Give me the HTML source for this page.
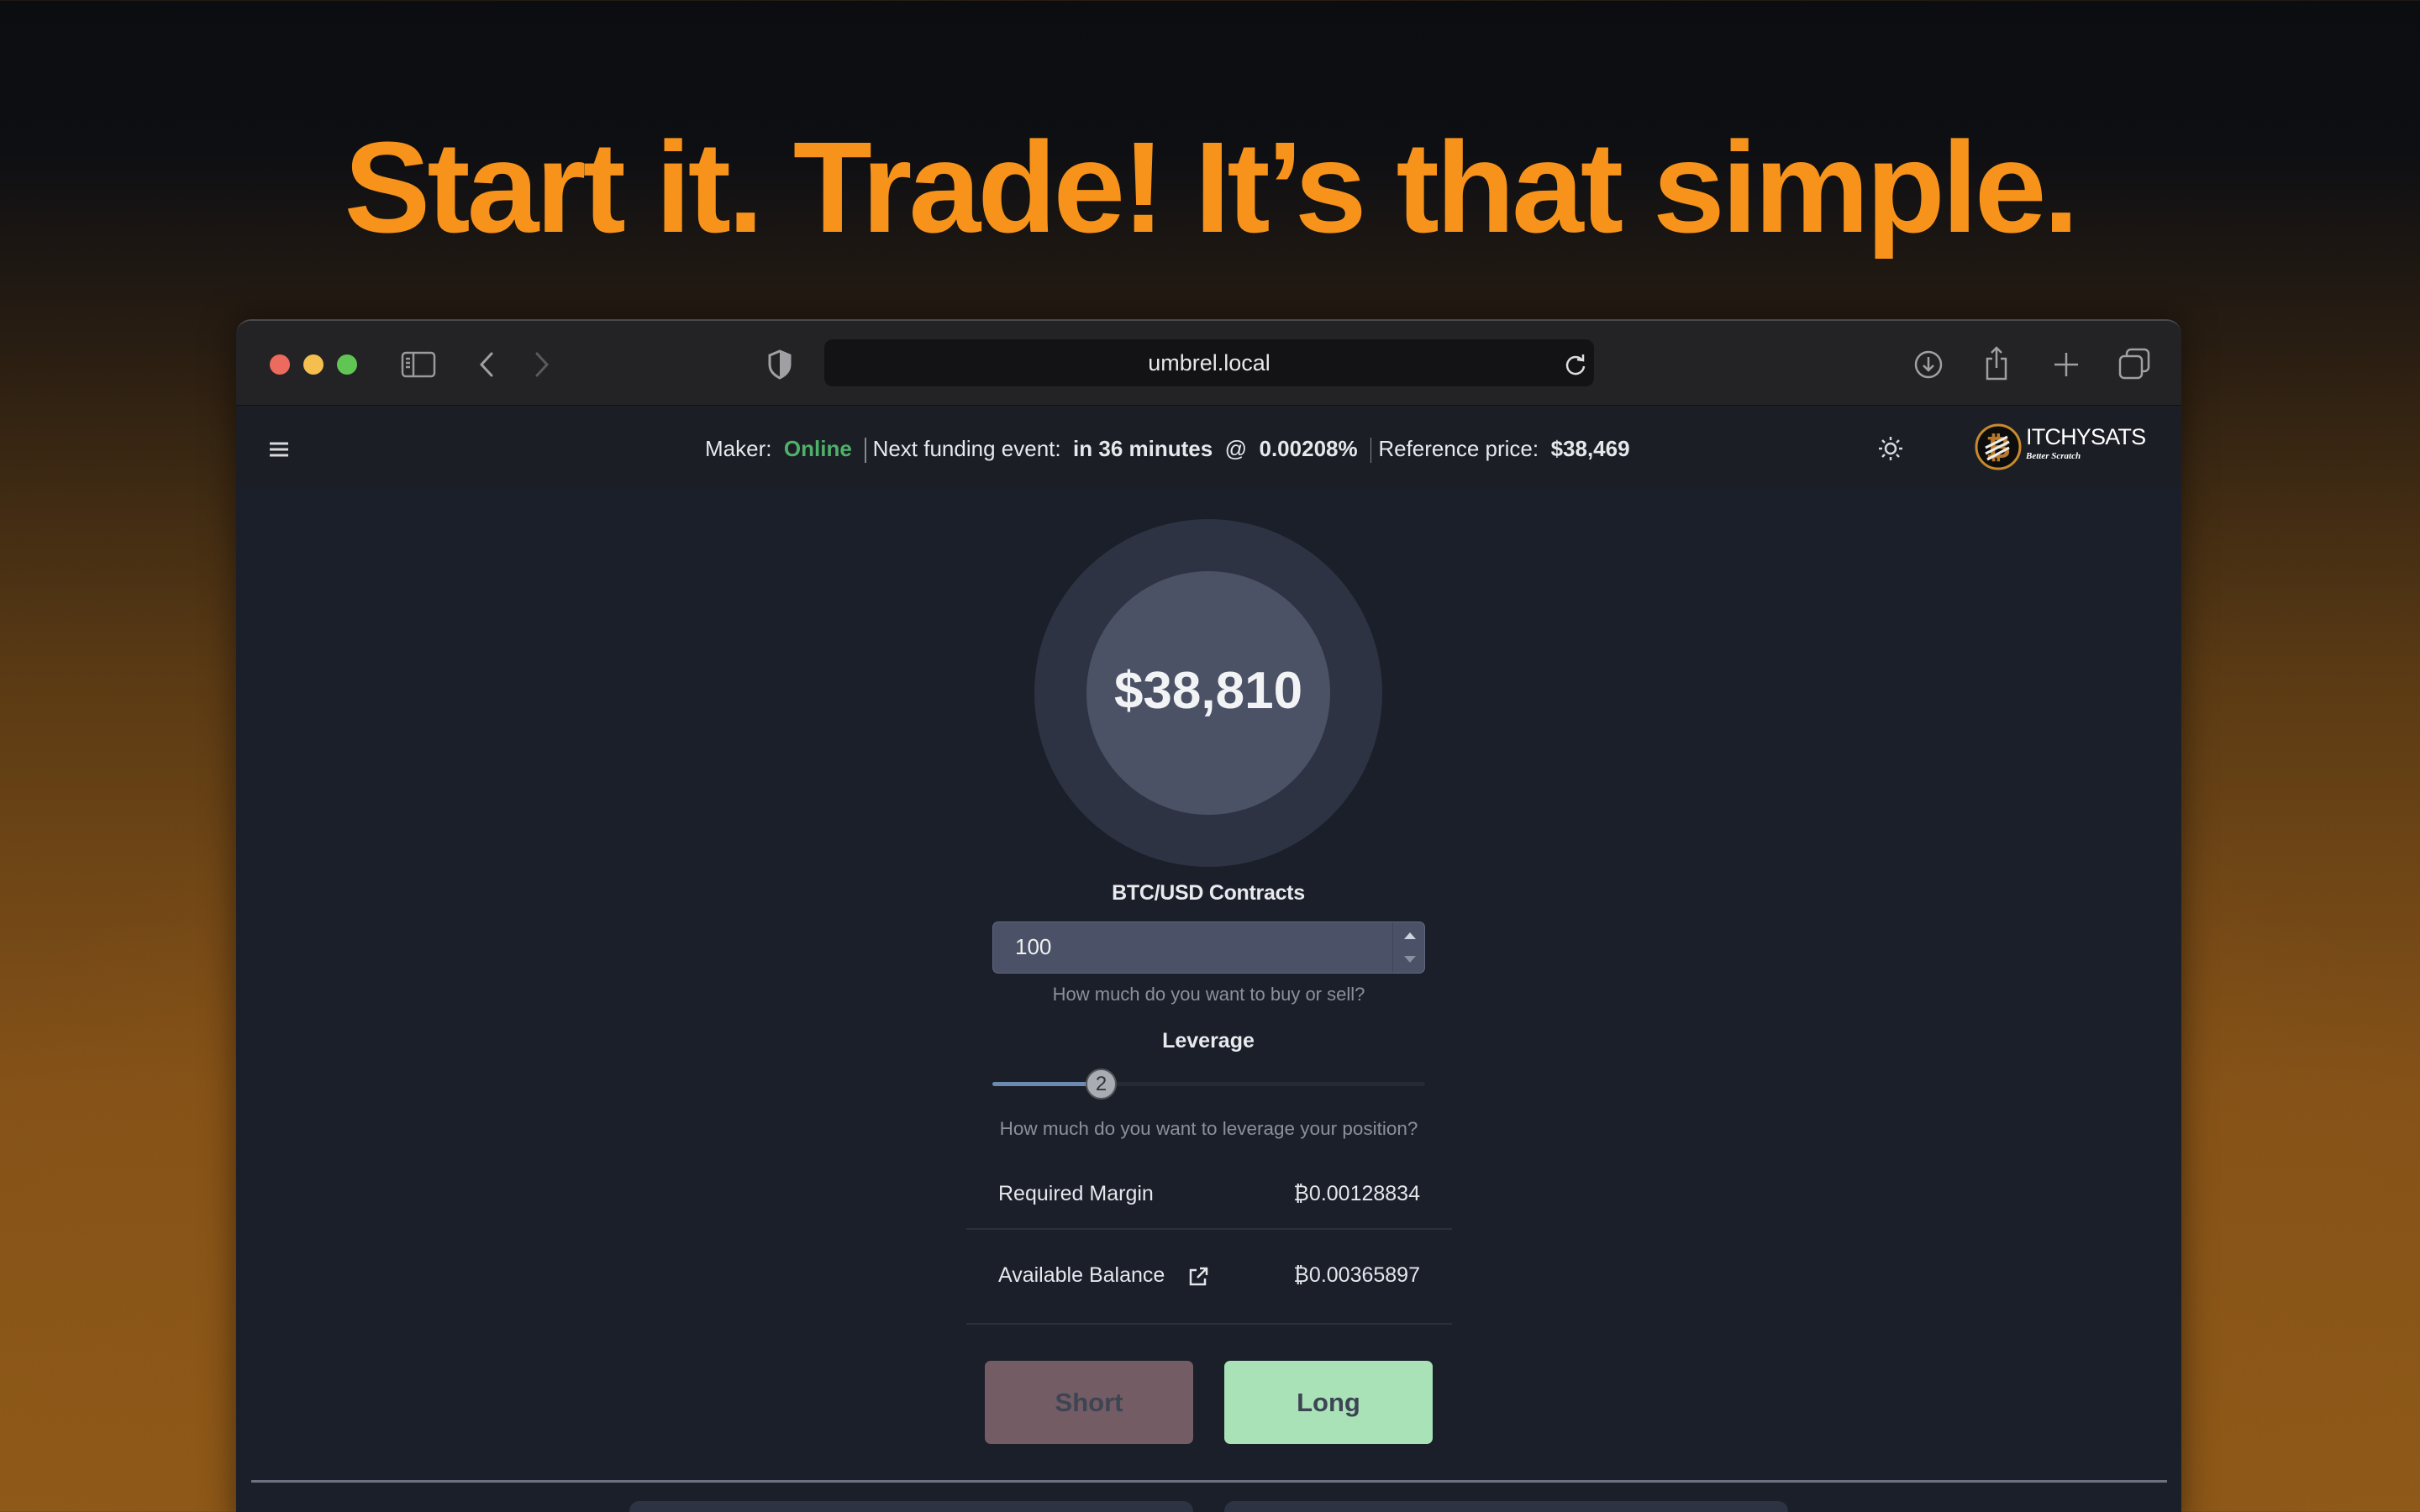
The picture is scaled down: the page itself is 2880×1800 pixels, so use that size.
<!DOCTYPE html>
<html><head><meta charset="utf-8">
<style>
*{margin:0;padding:0;box-sizing:border-box}
html,body{width:2880px;height:1800px;overflow:hidden}
body{font-family:"Liberation Sans",sans-serif;position:relative;
background:
radial-gradient(ellipse 1700px 1300px at 1440px 1900px, rgba(170,105,25,0.85) 0%, rgba(140,85,20,0.6) 45%, rgba(0,0,0,0) 100%),
linear-gradient(180deg,#0b0d11 0px,#0e0f13 180px,#2a1e12 420px,#5a3a14 800px,#855218 1300px,#8f5a1a 1800px);}
.h1{position:absolute;left:0;width:2880px;top:133px;text-align:center;color:#f7931a;font-weight:700;font-size:154px;letter-spacing:-3.9px;line-height:180px}
.win{position:absolute;left:281px;top:380px;width:2315px;height:1440px;background:#1b1f2a;border-radius:18px 18px 0 0;overflow:hidden;box-shadow:0 0 40px rgba(0,0,0,.5);border-top:2px solid #4a4a4c}
.tb{position:absolute;left:0;top:0;width:100%;height:101px;background:#232326;border-bottom:1px solid #111}
.dot{position:absolute;top:40px;width:24px;height:24px;border-radius:50%}
.url{position:absolute;left:700px;top:22px;width:916px;height:56px;background:#131315;border-radius:10px;color:#e8e8e8;font-size:27px;text-align:center;line-height:56px}
.nav{position:absolute;left:0;top:101px;width:100%;height:99px;background:#1c1e25}
.t{position:absolute;white-space:nowrap}
svg{position:absolute}
</style></head><body>
<div class="h1">Start it. Trade! It’s that simple.</div>
<div class="win">
 <div class="tb">
  <div class="dot" style="left:40px;background:#ed6a5e"></div>
  <div class="dot" style="left:80px;background:#f4bf4f"></div>
  <div class="dot" style="left:120px;background:#61c554"></div>
  <svg style="left:196px;top:36px" width="42" height="32" viewBox="0 0 42 32" fill="none" stroke="#9a9a9e" stroke-width="2.5"><rect x="2" y="2" width="38" height="28" rx="4"/><line x1="15" y1="2" x2="15" y2="30"/><line x1="6" y1="9" x2="11" y2="9"/><line x1="6" y1="14" x2="11" y2="14"/><line x1="6" y1="19" x2="11" y2="19"/></svg>
  <svg style="left:288px;top:36px" width="20" height="32" viewBox="0 0 20 32" fill="none" stroke="#a0a0a4" stroke-width="3" stroke-linecap="round"><path d="M16 3 L4 16 L16 29"/></svg>
  <svg style="left:354px;top:36px" width="20" height="32" viewBox="0 0 20 32" fill="none" stroke="#5a5a5e" stroke-width="3" stroke-linecap="round"><path d="M4 3 L16 16 L4 29"/></svg>
  <svg style="left:632px;top:34px" width="30" height="36" viewBox="0 0 30 36"><path d="M15 2 L27 7 L27 18 C27 26 21 31 15 34 C9 31 3 26 3 18 L3 7 Z" fill="none" stroke="#a0a0a4" stroke-width="3"/><path d="M15 2 L27 7 L27 18 C27 26 21 31 15 34 Z" fill="#a0a0a4"/></svg>
  <div class="url">umbrel.local</div>
  <svg style="left:1580px;top:37px" width="28" height="30" viewBox="0 0 28 30" fill="none" stroke="#ddd" stroke-width="2.5"><path d="M22 10 A10 10 0 1 0 24 17"/><path d="M16 9 L23 10 L23 3"/></svg>
  <svg style="left:1996px;top:34px" width="36" height="36" viewBox="0 0 36 36" fill="none" stroke="#a0a0a4" stroke-width="2.5"><circle cx="18" cy="18" r="15"/><path d="M18 9 V25 M12 19 L18 25 L24 19"/></svg>
  <svg style="left:2080px;top:30px" width="30" height="42" viewBox="0 0 30 42" fill="none" stroke="#a0a0a4" stroke-width="2.5"><path d="M10 15 H4 V39 H26 V15 H20"/><path d="M15 2 V26 M9 8 L15 2 L21 8"/></svg>
  <svg style="left:2162px;top:36px" width="32" height="32" viewBox="0 0 32 32" stroke="#a0a0a4" stroke-width="2.5"><path d="M16 2 V30 M2 16 H30"/></svg>
  <svg style="left:2240px;top:32px" width="38" height="38" viewBox="0 0 38 38" fill="none" stroke="#a0a0a4" stroke-width="2.5"><rect x="10" y="2" width="26" height="26" rx="5"/><rect x="2" y="10" width="26" height="26" rx="5" fill="#232326"/></svg>
 </div>
 <div class="nav">
  <svg style="left:40px;top:43px" width="22" height="18" viewBox="0 0 22 18" stroke="#d8d8dc" stroke-width="3"><path d="M0 2 H22 M0 9 H22 M0 16 H22"/></svg>
  <div class="t" style="left:558px;top:35px;font-size:26px;color:#e6e8ec;line-height:32px;letter-spacing:0px">Maker:&nbsp; <b style="color:#4fb06a">Online</b> <span style="display:inline-block;width:1.5px;height:30px;background:#888;vertical-align:middle;margin:0 8px"></span>Next funding event:&nbsp; <b>in 36 minutes</b>&nbsp; @&nbsp; <b>0.00208%</b> <span style="display:inline-block;width:1.5px;height:30px;background:#888;vertical-align:middle;margin:0 8px"></span>Reference price:&nbsp; <b>$38,469</b></div>
  <svg style="left:1954px;top:36px" width="30" height="30" viewBox="0 0 30 30" fill="none" stroke="#d8d8dc" stroke-width="2.5"><circle cx="15" cy="15" r="6"/><path d="M15 1 V5 M15 25 V29 M1 15 H5 M25 15 H29 M5 5 L8 8 M22 22 L25 25 M5 25 L8 22 M22 8 L25 5"/></svg>
  <svg style="left:2068px;top:20px" width="58" height="58" viewBox="0 0 58 58"><circle cx="29" cy="29" r="26" fill="#0d0d0d" stroke="#c88a2e" stroke-width="3"/><text x="29" y="42" text-anchor="middle" font-size="36" font-weight="700" fill="#b87a28" font-family="Liberation Sans">₿</text><path d="M14 30 L40 17 M14 37 L42 23 M16 44 L42 30" stroke="#eee" stroke-width="3"/></svg>
  <div class="t" style="left:2130px;top:22px;font-size:27px;color:#fff;font-weight:400;letter-spacing:-0.8px">ITCHYSATS</div>
  <div class="t" style="left:2130px;top:54px;font-size:11px;color:#fff;font-style:italic;font-family:'Liberation Serif',serif;font-weight:700">Better Scratch</div>
 </div>
 <div style="position:absolute;left:950px;top:236px;width:414px;height:414px;border-radius:50%;background:#2e3343"></div>
 <div style="position:absolute;left:1012px;top:298px;width:290px;height:290px;border-radius:50%;background:#4b5266"></div>
 <div class="t" style="left:950px;width:414px;text-align:center;top:405px;font-size:62px;font-weight:700;color:#f2f3f5">$38,810</div>
 <div class="t" style="left:950px;width:414px;text-align:center;top:667px;font-size:25px;font-weight:700;color:#e8eaee;letter-spacing:-0.3px">BTC/USD Contracts</div>
 <div style="position:absolute;left:900px;top:715px;width:515px;height:62px;border-radius:7px;background:#4b5267;border:1px solid #606880"></div>
 <div style="position:absolute;left:1376px;top:716px;width:1px;height:60px;background:#3f4558"></div>
 <div class="t" style="left:927px;top:730px;font-size:26px;color:#f0f0f0">100</div>
 <svg style="left:1388px;top:724px" width="18" height="44" viewBox="0 0 18 44" fill="#cfd3dc"><path d="M2 12 L9 4 L16 12 Z"/><path d="M2 32 L9 40 L16 32 Z" fill="#8a90a0"/></svg>
 <div class="t" style="left:900px;width:515px;text-align:center;top:789px;font-size:22px;color:#8b909c">How much do you want to buy or sell?</div>
 <div class="t" style="left:950px;width:414px;text-align:center;top:843px;font-size:25px;font-weight:700;color:#e8eaee">Leverage</div>
 <div style="position:absolute;left:900px;top:906px;width:515px;height:5px;border-radius:3px;background:#252a36"></div>
 <div style="position:absolute;left:900px;top:906px;width:130px;height:5px;border-radius:3px;background:#6c8ab0"></div>
 <div style="position:absolute;left:1011px;top:890px;width:37px;height:37px;border-radius:50%;background:#a8acb4;border:2px solid #555;text-align:center;line-height:33px;font-size:24px;color:#333">2</div>
 <div class="t" style="left:860px;width:595px;text-align:center;top:949px;font-size:22.5px;color:#8b909c">How much do you want to leverage your position?</div>
 <div class="t" style="left:907px;top:1025px;font-size:25px;color:#e4e6ea">Required Margin</div>
 <div class="t" style="left:1100px;width:309px;text-align:right;top:1025px;font-size:25px;color:#e4e6ea">₿0.00128834</div>
 <div style="position:absolute;left:869px;top:1080px;width:578px;height:2px;background:#2b303d"></div>
 <div class="t" style="left:907px;top:1122px;font-size:25px;color:#e4e6ea">Available Balance</div>
 <svg style="left:1133px;top:1126px" width="24" height="24" viewBox="0 0 24 24" fill="none" stroke="#e4e6ea" stroke-width="2.5"><path d="M10 4 H3 V21 H20 V14"/><path d="M14 2 H22 V10 M22 2 L11 13"/></svg>
 <div class="t" style="left:1100px;width:309px;text-align:right;top:1122px;font-size:25px;color:#e4e6ea">₿0.00365897</div>
 <div style="position:absolute;left:869px;top:1193px;width:578px;height:2px;background:#2b303d"></div>
 <div style="position:absolute;left:891px;top:1238px;width:248px;height:99px;border-radius:7px;background:#735c64;color:#3d4454;font-size:31px;font-weight:700;text-align:center;line-height:99px">Short</div>
 <div style="position:absolute;left:1176px;top:1238px;width:248px;height:99px;border-radius:7px;background:#a9e2b7;color:#3d4454;font-size:31px;font-weight:700;text-align:center;line-height:99px">Long</div>
 <div style="position:absolute;left:18px;top:1380px;width:2280px;height:3px;background:#6b7082"></div>
 <div style="position:absolute;left:468px;top:1405px;width:671px;height:60px;border-radius:12px;background:#2e3344"></div>
 <div style="position:absolute;left:1176px;top:1405px;width:671px;height:60px;border-radius:12px;background:#2e3344"></div>
</div>
</body></html>
